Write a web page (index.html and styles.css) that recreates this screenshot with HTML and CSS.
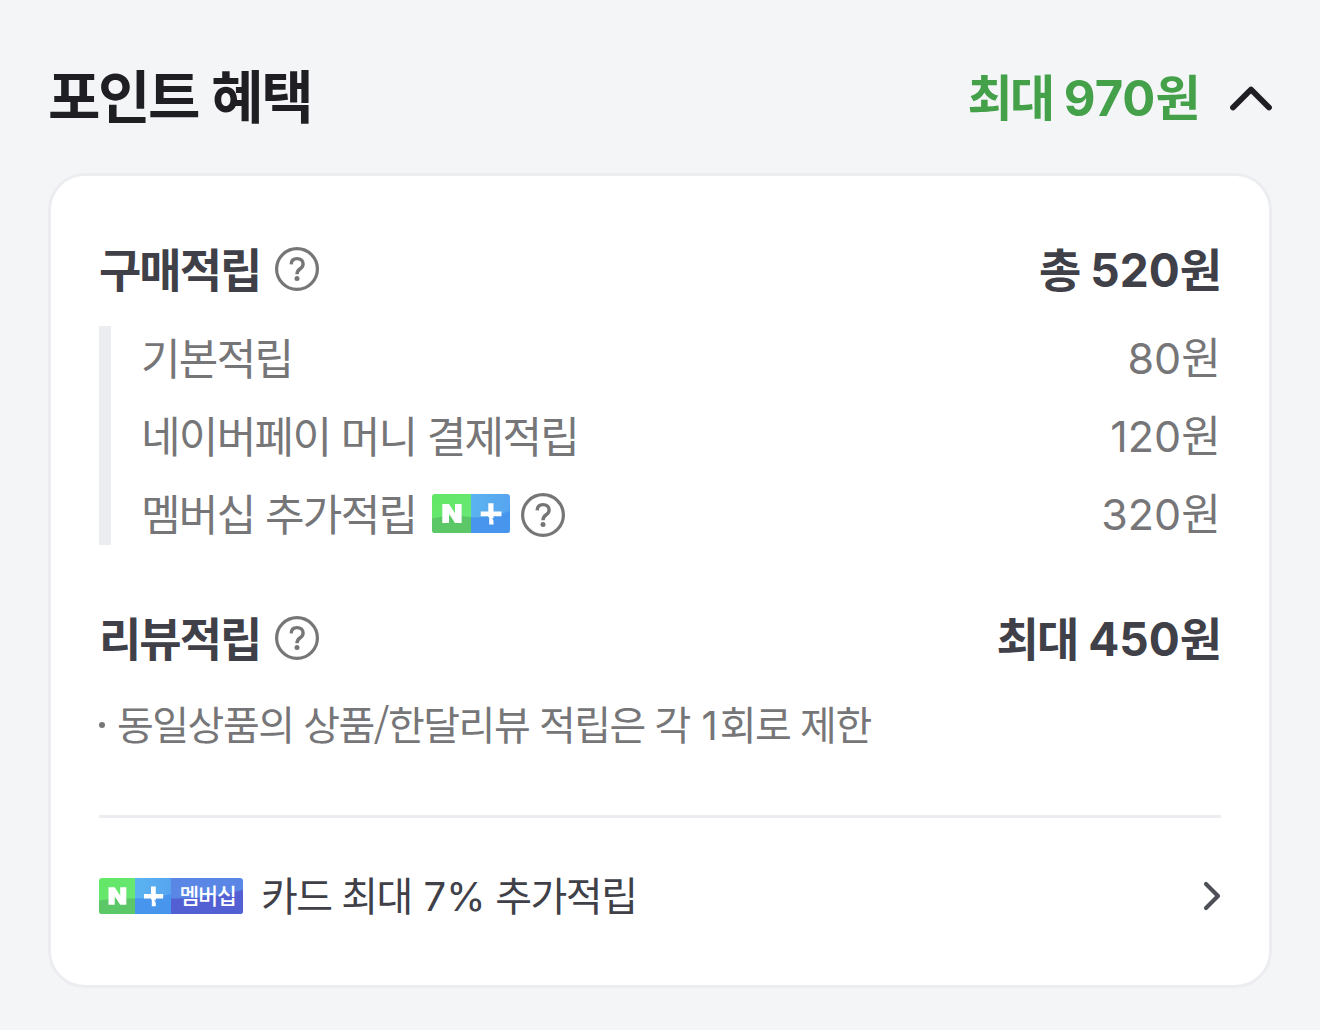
FILE: index.html
```html
<!DOCTYPE html>
<html lang="ko">
<head>
<meta charset="utf-8">
<title>포인트 혜택</title>
<link rel="stylesheet" href="styles.css">
</head>
<body>
<svg class="defs" width="0" height="0" aria-hidden="true">
  <defs>
    <linearGradient id="green" x1="0" y1="0" x2="1" y2="1"><stop offset="0" stop-color="#62e765"/><stop offset="1" stop-color="#6ae879"/></linearGradient>
    <linearGradient id="blue" x1="0" y1="0" x2="1" y2="0"><stop offset="0" stop-color="#5ab4ef"/><stop offset="1" stop-color="#57a4f0"/></linearGradient>
    <symbol id="help" viewBox="0 0 44 44">
      <circle cx="22" cy="22" r="20.400" fill="none" stroke="#767678" stroke-width="3.200"/>
      <path d="M16.200 17.400C16.300 13.400 18.600 11.600 22 11.600c3.600 0 6.100 2.100 6.100 5.300 0 2.500-1.300 3.800-3.200 5.100-2.200 1.500-2.900 2.600-2.900 5.300" fill="none" stroke="#767678" stroke-width="3.400"/>
      <circle cx="22" cy="31.600" r="2.500" fill="#767678"/>
    </symbol>
    <symbol id="nmark" viewBox="0 0 39 39">
      <path d="M10.300 10H17l6 9.200V10h6.600v19H23l-6-9.200V29h-6.700z" fill="#fff"/>
    </symbol>
    <symbol id="plus" viewBox="0 0 39 39">
      <path d="M17.300 9.200h5.200v8.200h8v4.800H9.700v-4.800h7.600zM17.300 22.100h5.200v2.300q-3-.8-5.200-1.200zM18.200 23.200q4.300.8 4.300 4.400V30.500h-4.300z" fill="#fff"/>
    </symbol>
  </defs>
</svg>
<main class="benefit">
  <header class="top">
    <h1 class="title">포인트 혜택</h1>
    <div class="total"><span>최대 <b class="num">970</b>원</span>
      <svg class="fold" width="44" height="28" viewBox="0 0 44 28"><path d="M4 23.500 22 5.500 40 23.500" fill="none" stroke="#1e1e23" stroke-width="5.800" stroke-linecap="round" stroke-linejoin="round"/></svg>
    </div>
  </header>
  <section class="card">
    <div class="row head">
      <h2 class="label"><span>구매적립</span><svg class="help"><use href="#help"/></svg></h2>
      <span class="sum">총 <b class="num">520</b>원</span>
    </div>
    <ul class="list">
      <li class="row"><span class="item"><span>기본적립</span></span><span class="value"><b class="num">80</b>원</span></li>
      <li class="row"><span class="item"><span>네이버페이 머니 결제적립</span></span><span class="value"><b class="num">120</b>원</span></li>
      <li class="row"><span class="item"><span>멤버십 추가적립</span><svg class="badge" width="78" height="39" viewBox="0 0 78 39">
          <path d="M3 0H39V39H3Q0 39 0 36V3Q0 0 3 0z" fill="url(#green)"/>
          <path d="M0 24.500Q18 20.500 39 23V39H3Q0 39 0 36z" fill="#5bc766"/>
          <path d="M39 0H75Q78 0 78 3V36Q78 39 75 39H39z" fill="url(#blue)"/>
          <path d="M39 23.500Q59 24 78 17V36Q78 39 75 39H39z" fill="#4895ee"/>
          <use href="#nmark" width="39" height="39"/><use href="#plus" x="39" width="39" height="39"/>
        </svg><svg class="help"><use href="#help"/></svg></span><span class="value"><b class="num">320</b>원</span></li>
    </ul>
    <div class="row head">
      <h2 class="label"><span>리뷰적립</span><svg class="help"><use href="#help"/></svg></h2>
      <span class="sum">최대 <b class="num">450</b>원</span>
    </div>
    <p class="note"><i class="dot"></i><span>동일상품의 상품/한달리뷰 적립은 각 <b class="num">1</b>회로 제한</span></p>
    <div class="row foot">
      <span class="promo"><svg class="member" width="144" height="36" viewBox="0 0 144 36">
          <path d="M3 0H36V36H3Q0 36 0 33V3Q0 0 3 0z" fill="url(#green)"/>
          <path d="M0 22.500Q17 19.500 36 20.500V36H3Q0 36 0 33z" fill="#5bc766"/>
          <path d="M36 0H72V36H36z" fill="url(#blue)"/>
          <path d="M36 20.500Q55 20.500 72 16V36H36z" fill="#4895ee"/>
          <path d="M72 0H141Q144 0 144 3V33Q144 36 141 36H72z" fill="#5a87e6"/>
          <path d="M72 20.500Q111 21 144 12V33Q144 36 141 36H72z" fill="#5260d3"/>
          <use href="#nmark" width="36" height="36"/><use href="#plus" x="36" width="36" height="36"/>
          <text class="member-text" x="80.500" y="25.500">멤버십</text>
        </svg><span>카드 최대 <b class="num">7%</b> 추가적립</span></span>
      <svg class="next" width="22" height="34" viewBox="0 0 22 34"><path d="M7 5 19 17 7 29" fill="none" stroke="#4d5057" stroke-width="4.200" stroke-linecap="round" stroke-linejoin="round"/></svg>
    </div>
  </section>
</main>
</body>
</html>
```
FILE: styles.css
```css
* { box-sizing: border-box; margin: 0; padding: 0; }
body { background: #f3f5f7; font-family: "Noto Sans CJK KR", sans-serif; white-space: nowrap; }
.defs { display: block; }
.num { font-family: Inter, sans-serif; font-weight: inherit; letter-spacing: 0; }
svg { flex: none; }
.benefit { height: 1030px; padding: 48px 48px 42px; display: flex; flex-direction: column; }
.top { height: 100px; margin-bottom: 25px; display: flex; justify-content: space-between; align-items: center; }
.title { font-size: 57px; font-weight: 700; line-height: 100px; padding-bottom: 10px; letter-spacing: -2.500px; color: #1e1e23; }
.total { display: flex; align-items: center; gap: 31px; font-size: 49px; font-weight: 700; line-height: 100px; letter-spacing: -2.500px; color: #45a04a; }
.total span { padding-bottom: 2px; }
.total .num { letter-spacing: 0; }
.fold { margin-right: -1px; }
.card { flex: 1; padding: 57px 48px 0; border: 3px solid #ecedf1; border-radius: 37px; background: #fff; }
.row { display: flex; align-items: center; justify-content: space-between; }
.head { height: 72px; font-size: 46px; line-height: 68px; font-weight: 700; color: #404048; letter-spacing: -2px; }
.label { display: flex; align-items: center; font-size: inherit; }
.label span, .item > span, .promo span { padding-bottom: 4px; }
.label span { padding-bottom: 5px; }
.sum, .value { padding-bottom: 2px; }
.sum { padding-right: 1px; }
.help { width: 44px; height: 44px; margin-left: 15px; }
.list { list-style: none; height: 219px; margin: 21px 0 57px; padding-left: 30px; border-left: 12px solid #ecedf1; color: #767678; font-size: 43px; letter-spacing: -1.700px; }
.list .row { height: 63px; margin-bottom: 15px; line-height: 60px; }
.value { padding-right: 2px; }
.item, .promo { display: flex; align-items: center; }
.badge { margin-left: 16px; }
.badge + .help { margin: 2px 0 0 11px; }
.note { display: flex; align-items: center; height: 60px; margin-top: 21px; font-size: 40px; line-height: 60px; letter-spacing: -1.500px; color: #767678; }
.note span { padding-bottom: 2px; }
.note .num { margin: 0 2px; }
.dot { width: 6px; height: 6px; margin-right: 12px; border-radius: 50%; background: #767678; }
.foot { height: 158px; margin-top: 60px; border-top: 3px solid #ecedf1; font-size: 40px; letter-spacing: -1.500px; color: #404048; }
.foot .num { margin-left: 2px; }
.member { margin-right: 18px; }
.member-text { fill: #fff; font-size: 21.500px; font-weight: 500; letter-spacing: -1px; }
```
